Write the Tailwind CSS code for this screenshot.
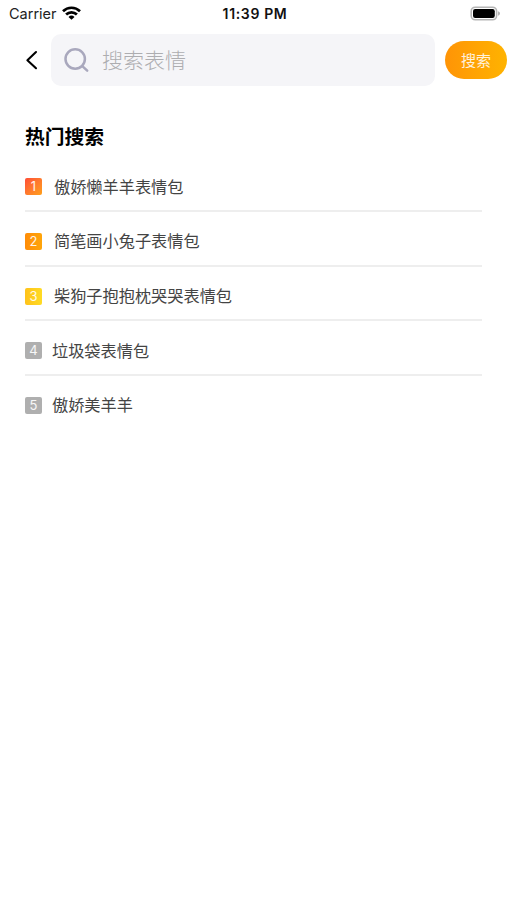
<!DOCTYPE html>
<html lang="zh-CN">
<head>
    <meta charset="UTF-8">
    <meta name="viewport" content="width=device-width, initial-scale=1.0">
    <title>搜索表情</title>
    <script src="https://cdn.jsdelivr.net/npm/@tailwindcss/browser@4"></script>
</head>

<body class="bg-white h-[900px] overflow-hidden font-['Inter','Noto_Sans_CJK_SC',sans-serif]">
    <!-- status bar -->
    <header class="grid grid-cols-3 items-center h-[28px] pl-[9px] pr-[6px] text-[14.5px] leading-none text-[#222]">
        <div class="flex items-center gap-[5px]">
            <span>Carrier</span>
            <svg class="w-[19px] h-[14px] -mt-[2px]" viewBox="0 0 19 14" fill="none" stroke="#000" stroke-width="2.7">
                <path d="M1 5.2a12.2 12.2 0 0 1 17 0"/>
                <path d="M4.1 8.5a7.7 7.7 0 0 1 10.8 0"/>
                <path d="M9.5 13.8L6.5 10.9a4.3 4.3 0 0 1 6 0z" fill="#000" stroke="none"/>
            </svg>
        </div>
        <span class="text-center font-semibold text-[14px] tracking-[0.65px] text-[#111] whitespace-nowrap">11:39 PM</span>
        <svg class="justify-self-end w-[31px] h-[15px] -mt-[1px]" viewBox="0 0 31 15">
            <rect x="1.2" y="1.2" width="25.4" height="12.6" rx="4" fill="#fff" stroke="#b5b5b5" stroke-width="1.6"/>
            <rect x="3" y="3" width="21.8" height="9" rx="2.2" fill="#000"/>
            <path d="M28.2 5.3c2.2.8 2.2 3.6 0 4.4z" fill="#a5a5a5"/>
        </svg>
    </header>

    <!-- search -->
    <div class="flex items-center h-[52px] mt-[6px] pl-[25px]">
        <svg class="w-[13px] h-[20px] mr-[13px]" viewBox="0 0 13 20" fill="none" stroke="#000" stroke-width="2.1" stroke-linecap="round" stroke-linejoin="round">
            <path d="M11 2L2.4 10.2L11 18.2"/>
        </svg>
        <div class="flex items-center w-[384px] h-[52px] pl-[13px] rounded-[10px] bg-[#f5f5f8]">
            <svg class="w-[26px] h-[26px] mr-[12px]" viewBox="0 0 26 26" fill="none" stroke="#a9a8bd" stroke-width="2.5" stroke-linecap="round">
                <circle cx="11.2" cy="12" r="9.7"/>
                <path d="M18.3 19.2l4.9 4.5"/>
            </svg>
            <span class="text-[21px] leading-none font-light text-[#adadb0]">搜索表情</span>
        </div>
        <button class="w-[62px] h-[38px] ml-[10px] rounded-full bg-linear-to-r from-[#ff9406] to-[#ffb300] text-[15px] leading-none text-white/85">搜索</button>
    </div>

    <!-- hot searches -->
    <main class="px-[25px] pt-[41px]">
        <h1 class="h-[20px] text-[19.8px] leading-[20px] font-bold text-black">热门搜索</h1>
        <ul class="mt-[10.6px] text-[16.2px] leading-none text-[#444]">
            <li class="flex items-center h-[54.6px] pt-[6px] border-b-2 border-[#eeeeee]">
                <span class="flex items-center justify-center size-[17px] mr-[12px] rounded-[2px] bg-linear-to-br from-[#ff4b36] to-[#ff9f18] text-[13px] text-white/90">1</span>傲娇懒羊羊表情包
            </li>
            <li class="flex items-center h-[54.6px] pt-[6px] border-b-2 border-[#eeeeee]">
                <span class="flex items-center justify-center size-[17px] mr-[12px] rounded-[2px] bg-linear-to-r from-[#ff8c08] to-[#ffa50a] text-[13px] text-white/90">2</span>简笔画小兔子表情包
            </li>
            <li class="flex items-center h-[54.6px] pt-[6px] border-b-2 border-[#eeeeee]">
                <span class="flex items-center justify-center size-[17px] mr-[12px] rounded-[2px] bg-linear-to-r from-[#ffc21a] to-[#ffdb24] text-[13px] text-white/90">3</span>柴狗子抱抱枕哭哭表情包
            </li>
            <li class="flex items-center h-[54.6px] pt-[6px] border-b-2 border-[#eeeeee]">
                <span class="flex items-center justify-center size-[17px] mr-[10px] rounded-[2px] bg-[#afafaf] text-[13px] text-white/90">4</span>垃圾袋表情包
            </li>
            <li class="flex items-center h-[54.6px] pt-[4px]">
                <span class="flex items-center justify-center size-[17px] mr-[10px] rounded-[2px] bg-[#afafaf] text-[13px] text-white/90">5</span>傲娇美羊羊
            </li>
        </ul>
    </main>
</body>
</html>
